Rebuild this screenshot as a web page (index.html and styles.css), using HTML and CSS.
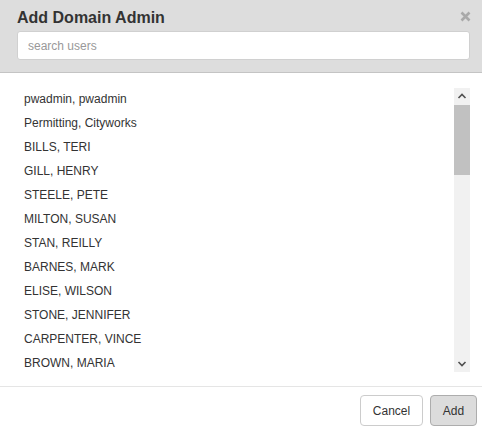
FILE: index.html
```html
<!DOCTYPE html>
<html>
<head>
<meta charset="utf-8">
<link rel="stylesheet" href="styles.css">
</head>
<body>
<div class="modal">
  <div class="header">
    <div class="title-row">
      <h4 class="title">Add Domain Admin</h4>
      <svg class="close" width="11" height="11" viewBox="0 0 11 11" aria-label="close">
        <path d="M1.5 1.5 L9.5 9.5 M9.5 1.5 L1.5 9.5" stroke="#a9a9a9" stroke-width="2.6" stroke-linecap="butt" fill="none"/>
      </svg>
    </div>
    <input class="search" type="text" placeholder="search users">
  </div>
  <div class="body">
    <div class="listbox">
      <div class="viewport">
        <ul class="list">
          <li>pwadmin, pwadmin</li>
          <li>Permitting, Cityworks</li>
          <li>BILLS, TERI</li>
          <li>GILL, HENRY</li>
          <li>STEELE, PETE</li>
          <li>MILTON, SUSAN</li>
          <li>STAN, REILLY</li>
          <li>BARNES, MARK</li>
          <li>ELISE, WILSON</li>
          <li>STONE, JENNIFER</li>
          <li>CARPENTER, VINCE</li>
          <li>BROWN, MARIA</li>
        </ul>
      </div>
      <div class="scrollbar">
        <div class="sb-btn">
          <svg width="16" height="17" viewBox="0 0 16 17"><path d="M4.5 10 L8 6.5 L11.5 10" stroke="#505050" stroke-width="1.6" fill="none"/></svg>
        </div>
        <div class="sb-thumb"></div>
        <div class="sb-track"></div>
        <div class="sb-btn">
          <svg width="16" height="17" viewBox="0 0 16 17"><path d="M4.5 7 L8 10.5 L11.5 7" stroke="#505050" stroke-width="1.6" fill="none"/></svg>
        </div>
      </div>
    </div>
  </div>
  <div class="footer">
    <button class="btn btn-cancel">Cancel</button>
    <button class="btn btn-add">Add</button>
  </div>
</div>
</body>
</html>
```
FILE: styles.css
```css
html, body {
  margin: 0;
  padding: 0;
  background: #fff;
}
body {
  font-family: "Liberation Sans", Arial, sans-serif;
  color: #333;
  font-size: 12px;
}
.modal {
  width: 482px;
  height: 430px;
  display: flex;
  flex-direction: column;
}
.header {
  background: #dddddd;
  border-bottom: 1px solid #c4c4c4;
  padding: 8px 11px 12px 17px;
  height: 52px;
}
.title-row {
  display: flex;
  justify-content: space-between;
  align-items: flex-start;
}
.title {
  margin: 0;
  font-size: 16px;
  font-weight: bold;
  line-height: 20px;
  color: #333;
}
.close {
  display: block;
  margin-top: 3px;
}
.search {
  display: block;
  box-sizing: border-box;
  width: 453px;
  height: 29px;
  margin-top: 3px;
  border: 1px solid #d0d0d0;
  border-radius: 3px;
  background: #fff;
  padding: 0 10px;
  font-family: "Liberation Sans", Arial, sans-serif;
  font-size: 12px;
  color: #333;
  outline: none;
}
.search::placeholder {
  color: #999;
}
.body {
  padding: 15px 12px 14px 17px;
  border-bottom: 1px solid #e5e5e5;
}
.listbox {
  display: flex;
  height: 284px;
}
.viewport {
  flex: 1;
  overflow: hidden;
}
.list {
  list-style: none;
  margin: -1px 0 0 0;
  padding: 0;
}
.list li {
  line-height: 24px;
  padding-left: 7px;
  white-space: nowrap;
}
.scrollbar {
  width: 16px;
  background: #f1f1f1;
  display: flex;
  flex-direction: column;
}
.sb-btn {
  height: 17px;
  flex: none;
}
.sb-btn svg {
  display: block;
}
.sb-thumb {
  height: 70px;
  background: #c1c1c1;
  flex: none;
}
.sb-track {
  flex: 1;
}
.footer {
  display: flex;
  justify-content: flex-end;
  gap: 7px;
  padding: 8px 5px 0 0;
}
.btn {
  box-sizing: border-box;
  height: 31px;
  padding: 0;
  border: 1px solid #cccccc;
  border-radius: 4px;
  background: #fff;
  font-family: "Liberation Sans", Arial, sans-serif;
  font-size: 12px;
  color: #333;
  text-align: center;
}
.btn-cancel {
  width: 63px;
}
.btn-add {
  width: 47px;
  background: #dcdcdc;
  border-color: #adadad;
}
```
